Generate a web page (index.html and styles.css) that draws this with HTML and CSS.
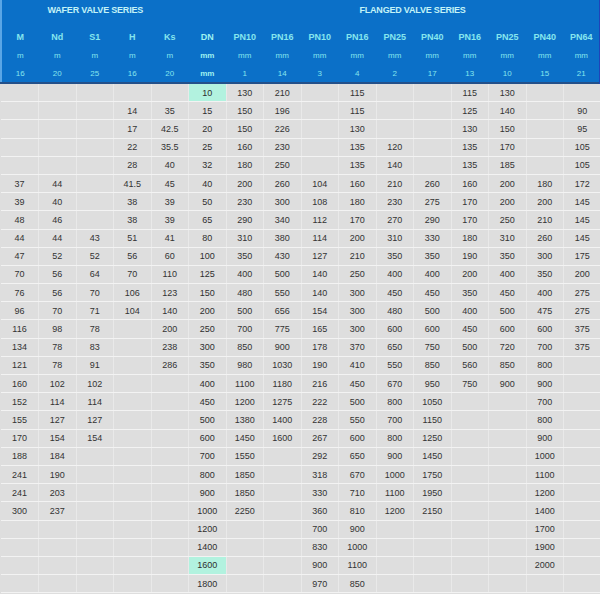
FILE: index.html
```html
<!DOCTYPE html>
<html>
<head>
<meta charset="utf-8">
<link rel="stylesheet" href="styles.css">
</head>
<body>
<table class="dims">
<colgroup>
<col><col><col><col><col><col><col><col><col><col><col><col><col><col><col><col>
</colgroup>
<thead>
<tr class="title">
<th colspan="5">WAFER VALVE SERIES</th>
<th></th>
<th colspan="10">FLANGED VALVE SERIES</th>
</tr>
<tr class="lab first">
<th>M</th><th>Nd</th><th>S1</th><th>H</th><th>Ks</th><th class="dnh">DN</th><th>PN10</th><th>PN16</th><th>PN10</th><th>PN16</th><th>PN25</th><th>PN40</th><th>PN16</th><th>PN25</th><th>PN40</th><th>PN64</th>
</tr>
<tr class="lab">
<th>m</th><th>m</th><th>m</th><th>m</th><th>m</th><th class="dnh">mm</th><th>mm</th><th>mm</th><th>mm</th><th>mm</th><th>mm</th><th>mm</th><th>mm</th><th>mm</th><th>mm</th><th>mm</th>
</tr>
<tr class="lab last">
<th>16</th><th>20</th><th>25</th><th>16</th><th>20</th><th class="dnh">mm</th><th>1</th><th>14</th><th>3</th><th>4</th><th>2</th><th>17</th><th>13</th><th>10</th><th>15</th><th>21</th>
</tr>
</thead>
<tbody>
<tr><td></td><td></td><td></td><td></td><td></td><td class="dn hl">10</td><td>130</td><td>210</td><td></td><td>115</td><td></td><td></td><td>115</td><td>130</td><td></td><td></td></tr>
<tr><td></td><td></td><td></td><td>14</td><td>35</td><td class="dn">15</td><td>150</td><td>196</td><td></td><td>115</td><td></td><td></td><td>125</td><td>140</td><td></td><td>90</td></tr>
<tr><td></td><td></td><td></td><td>17</td><td>42.5</td><td class="dn">20</td><td>150</td><td>226</td><td></td><td>130</td><td></td><td></td><td>130</td><td>150</td><td></td><td>95</td></tr>
<tr><td></td><td></td><td></td><td>22</td><td>35.5</td><td class="dn">25</td><td>160</td><td>230</td><td></td><td>135</td><td>120</td><td></td><td>135</td><td>170</td><td></td><td>105</td></tr>
<tr><td></td><td></td><td></td><td>28</td><td>40</td><td class="dn">32</td><td>180</td><td>250</td><td></td><td>135</td><td>140</td><td></td><td>135</td><td>185</td><td></td><td>105</td></tr>
<tr><td>37</td><td>44</td><td></td><td>41.5</td><td>45</td><td class="dn">40</td><td>200</td><td>260</td><td>104</td><td>160</td><td>210</td><td>260</td><td>160</td><td>200</td><td>180</td><td>172</td></tr>
<tr><td>39</td><td>40</td><td></td><td>38</td><td>39</td><td class="dn">50</td><td>230</td><td>300</td><td>108</td><td>180</td><td>230</td><td>275</td><td>170</td><td>200</td><td>200</td><td>145</td></tr>
<tr><td>48</td><td>46</td><td></td><td>38</td><td>39</td><td class="dn">65</td><td>290</td><td>340</td><td>112</td><td>170</td><td>270</td><td>290</td><td>170</td><td>250</td><td>210</td><td>145</td></tr>
<tr><td>44</td><td>44</td><td>43</td><td>51</td><td>41</td><td class="dn">80</td><td>310</td><td>380</td><td>114</td><td>200</td><td>310</td><td>330</td><td>180</td><td>310</td><td>260</td><td>145</td></tr>
<tr><td>47</td><td>52</td><td>52</td><td>56</td><td>60</td><td class="dn">100</td><td>350</td><td>430</td><td>127</td><td>210</td><td>350</td><td>350</td><td>190</td><td>350</td><td>300</td><td>175</td></tr>
<tr><td>70</td><td>56</td><td>64</td><td>70</td><td>110</td><td class="dn">125</td><td>400</td><td>500</td><td>140</td><td>250</td><td>400</td><td>400</td><td>200</td><td>400</td><td>350</td><td>200</td></tr>
<tr><td>76</td><td>56</td><td>70</td><td>106</td><td>123</td><td class="dn">150</td><td>480</td><td>550</td><td>140</td><td>300</td><td>450</td><td>450</td><td>350</td><td>450</td><td>400</td><td>275</td></tr>
<tr><td>96</td><td>70</td><td>71</td><td>104</td><td>140</td><td class="dn">200</td><td>500</td><td>656</td><td>154</td><td>300</td><td>480</td><td>500</td><td>400</td><td>500</td><td>475</td><td>275</td></tr>
<tr><td>116</td><td>98</td><td>78</td><td></td><td>200</td><td class="dn">250</td><td>700</td><td>775</td><td>165</td><td>300</td><td>600</td><td>600</td><td>450</td><td>600</td><td>600</td><td>375</td></tr>
<tr><td>134</td><td>78</td><td>83</td><td></td><td>238</td><td class="dn">300</td><td>850</td><td>900</td><td>178</td><td>370</td><td>650</td><td>750</td><td>500</td><td>720</td><td>700</td><td>375</td></tr>
<tr><td>121</td><td>78</td><td>91</td><td></td><td>286</td><td class="dn">350</td><td>980</td><td>1030</td><td>190</td><td>410</td><td>550</td><td>850</td><td>560</td><td>850</td><td>800</td><td></td></tr>
<tr><td>160</td><td>102</td><td>102</td><td></td><td></td><td class="dn">400</td><td>1100</td><td>1180</td><td>216</td><td>450</td><td>670</td><td>950</td><td>750</td><td>900</td><td>900</td><td></td></tr>
<tr><td>152</td><td>114</td><td>114</td><td></td><td></td><td class="dn">450</td><td>1200</td><td>1275</td><td>222</td><td>500</td><td>800</td><td>1050</td><td></td><td></td><td>700</td><td></td></tr>
<tr><td>155</td><td>127</td><td>127</td><td></td><td></td><td class="dn">500</td><td>1380</td><td>1400</td><td>228</td><td>550</td><td>700</td><td>1150</td><td></td><td></td><td>800</td><td></td></tr>
<tr><td>170</td><td>154</td><td>154</td><td></td><td></td><td class="dn">600</td><td>1450</td><td>1600</td><td>267</td><td>600</td><td>800</td><td>1250</td><td></td><td></td><td>900</td><td></td></tr>
<tr><td>188</td><td>184</td><td></td><td></td><td></td><td class="dn">700</td><td>1550</td><td></td><td>292</td><td>650</td><td>900</td><td>1450</td><td></td><td></td><td>1000</td><td></td></tr>
<tr><td>241</td><td>190</td><td></td><td></td><td></td><td class="dn">800</td><td>1850</td><td></td><td>318</td><td>670</td><td>1000</td><td>1750</td><td></td><td></td><td>1100</td><td></td></tr>
<tr><td>241</td><td>203</td><td></td><td></td><td></td><td class="dn">900</td><td>1850</td><td></td><td>330</td><td>710</td><td>1100</td><td>1950</td><td></td><td></td><td>1200</td><td></td></tr>
<tr><td>300</td><td>237</td><td></td><td></td><td></td><td class="dn">1000</td><td>2250</td><td></td><td>360</td><td>810</td><td>1200</td><td>2150</td><td></td><td></td><td>1400</td><td></td></tr>
<tr><td></td><td></td><td></td><td></td><td></td><td class="dn">1200</td><td></td><td></td><td>700</td><td>900</td><td></td><td></td><td></td><td></td><td>1700</td><td></td></tr>
<tr><td></td><td></td><td></td><td></td><td></td><td class="dn">1400</td><td></td><td></td><td>830</td><td>1000</td><td></td><td></td><td></td><td></td><td>1900</td><td></td></tr>
<tr><td></td><td></td><td></td><td></td><td></td><td class="dn hl">1600</td><td></td><td></td><td>900</td><td>1100</td><td></td><td></td><td></td><td></td><td>2000</td><td></td></tr>
<tr><td></td><td></td><td></td><td></td><td></td><td class="dn">1800</td><td></td><td></td><td>970</td><td>850</td><td></td><td></td><td></td><td></td><td></td><td></td></tr>
</tbody>
</table>
</body>
</html>
```
FILE: styles.css
```css
html, body {
  margin: 0;
  padding: 0;
  background: #dedede;
}

.dims {
  width: 600px;
  table-layout: fixed;
  border-collapse: collapse;
  font-family: "Liberation Sans", Arial, sans-serif;
  font-size: 9px;
}

.dims col {
  width: 37.5px;
}

.dims thead {
  background: #0b70c8;
}

.dims thead th {
  color: #86e6ee;
  font-weight: bold;
  text-align: center;
  padding: 0;
  overflow: hidden;
  white-space: nowrap;
}

.dims .title th {
  height: 28px;
  vertical-align: top;
  padding-top: 5px;
  box-sizing: border-box;
  color: #c4f3f7;
  font-size: 9px;
  letter-spacing: -0.2px;
}

.dims .lab th {
  height: 18px;
  font-size: 8px;
  font-weight: normal;
}

.dims .first th {
  font-size: 9px;
  font-weight: bold;
}

.dims .lab th.dnh {
  color: #9ff2f0;
  font-weight: bold;
}

.dims .last th {
  border-bottom: 2px solid #23508a;
}

.dims thead tr th:first-child {
  border-left: 2px solid #5aa6e6;
}

.dims thead tr th:last-child {
  border-right: 4px solid #1f43b8;
}

.dims tbody td {
  height: 17.2px;
  padding: 0;
  text-align: center;
  color: #333;
  border-bottom: 1px solid #f3f3f3;
  border-right: 1px solid #e9e9e9;
  white-space: nowrap;
  overflow: hidden;
  line-height: 10px;
}

.dims td.dn {
  color: #2e2e2e;
}

.dims td.hl {
  background: #b2f2df;
}
```
